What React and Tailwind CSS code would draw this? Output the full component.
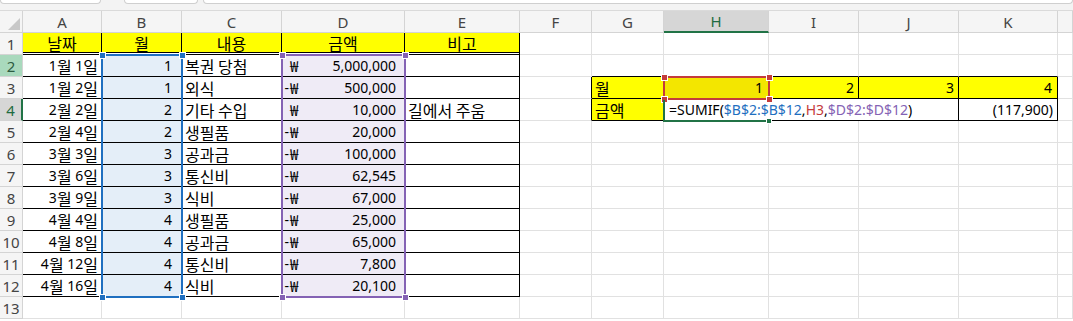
import React from 'react';

const COLS = ['A', 'B', 'C', 'D', 'E', 'F', 'G', 'H', 'I', 'J', 'K', ''];

const DATA = [
  ['1월 1일', 1, '복권 당첨', '', '5,000,000', ''],
  ['1월 2일', 1, '외식', '-', '500,000', ''],
  ['2월 2일', 2, '기타 수입', '', '10,000', '길에서 주움'],
  ['2월 4일', 2, '생필품', '-', '20,000', ''],
  ['3월 3일', 3, '공과금', '-', '100,000', ''],
  ['3월 6일', 3, '통신비', '-', '62,545', ''],
  ['3월 9일', 3, '식비', '-', '67,000', ''],
  ['4월 4일', 4, '생필품', '-', '25,000', ''],
  ['4월 8일', 4, '공과금', '-', '65,000', ''],
  ['4월 12일', 4, '통신비', '-', '7,800', ''],
  ['4월 16일', 4, '식비', '-', '20,100', ''],
];

const grid = 'border-r border-b border-[#e1e1e1]';
const boxed = 'border-r border-b border-black';

// Hangul runs get the CJK face a size up, like Malgun Gothic next to its latin digits
function Ko({ children }) {
  const parts = String(children).split(/([\uAC00-\uD7A3]+)/);
  return parts.map((p, i) =>
    /[\uAC00-\uD7A3]/.test(p) ? (
      <span key={i} className="text-[16px] font-['Noto_Sans_CJK_KR',sans-serif]">
        {p}
      </span>
    ) : (
      <span key={i}>{p}</span>
    )
  );
}

function Cell({ className = '', children }) {
  return <div className={`flex items-center overflow-visible whitespace-pre ${className}`}>{children}</div>;
}

function Handle({ x, y, color }) {
  return (
    <div
      className={`absolute w-[7px] h-[7px] border border-white ${color}`}
      style={{ left: x - 3, top: y - 3 }}
    />
  );
}

function RowHeader({ n }) {
  let cls = 'bg-[#f5f5f5] text-[#444] border-r border-b border-[#d4d4d4]';
  if (n === 2) cls = 'bg-[#a9d9bd] text-[#2d5c42] border-r border-b border-[#d4d4d4]';
  if (n === 4) cls = 'bg-[#d6d6d6] text-[#1e6b41] border-r-2 border-r-[#217346] border-b border-b-[#d4d4d4]';
  return <div className={`flex items-center justify-center text-[15px] ${cls}`}>{n}</div>;
}

export default function App() {
  return (
    <div className="w-[1073px] h-[321px] overflow-hidden bg-white text-[14px] text-black font-['Noto_Sans','Noto_Sans_CJK_KR',sans-serif]">
      {/* formula bar edge */}
      <div className="h-[11px] bg-[#f3f3f3] border-b border-[#dadada] flex gap-[24px]">
        <div className="w-[101px] h-[4px] bg-white border border-t-0 border-[#cfcfcf] rounded-b-[4px]" />
        <div className="w-[74px] h-[4px] bg-white border border-t-0 border-[#cfcfcf] rounded-b-[4px] -ml-[1px]" />
        <div className="flex-1 h-[4px] bg-white border border-t-0 border-[#cfcfcf] rounded-b-[4px] -ml-[19px]" />
      </div>

      <div className="relative grid grid-cols-[23px_79px_80px_100px_123px_115px_72px_72px_105px_90px_100px_99px_15px] auto-rows-[22px] leading-[22px]">
        {/* column headers */}
        <div className="relative bg-[#f5f5f5] border-r border-b border-[#d4d4d4]">
          <svg className="absolute inset-0" width="23" height="22">
            <polygon points="20,7 20,19 8,19" fill="#c8c8c8" />
          </svg>
        </div>
        {COLS.map((c, i) =>
          c === 'H' ? (
            <div key={i} className="flex items-center justify-center text-[15px] bg-[#d6d6d6] text-[#1e6b41] border-r border-[#d4d4d4] border-b-2 border-b-[#217346]">
              {c}
            </div>
          ) : (
            <div key={i} className="flex items-center justify-center text-[15px] bg-[#f5f5f5] text-[#444] border-r border-b border-[#d4d4d4]">
              {c}
            </div>
          )
        )}

        {/* row 1 */}
        <RowHeader n={1} />
        {['날짜', '월', '내용', '금액', '비고'].map((t) => (
          <Cell key={t} className="justify-center bg-[#ffff00] bg-clip-padding border-r border-r-black border-b-[3px] border-double border-b-black">
            <Ko>{t}</Ko>
          </Cell>
        ))}
        {Array.from({ length: 7 }).map((_, i) => (
          <div key={i} className={grid} />
        ))}

        {/* rows 2-12 */}
        {DATA.map((r, i) => {
          const n = i + 2;
          return (
            <React.Fragment key={n}>
              <RowHeader n={n} />
              <Cell className={`${boxed} justify-end pr-[3px]`}><Ko>{r[0]}</Ko></Cell>
              <Cell className={`${boxed} justify-end pr-[9px] bg-[#e4eef8]`}>{r[1]}</Cell>
              <Cell className={`${boxed} pl-[3px]`}><Ko>{r[2]}</Ko></Cell>
              <Cell className={`${boxed} justify-between pr-[8px] bg-[#efebf6]`}>
                <span className="flex">
                  <span className="w-[8px] text-right pr-[1px]">{r[3]}</span>
                  <span className="text-[15px] font-['Noto_Sans_CJK_KR',sans-serif]">₩</span>
                </span>
                <span>{r[4]}</span>
              </Cell>
              <Cell className={`${boxed} pl-[3px]`}><Ko>{r[5]}</Ko></Cell>
              {n === 3 || n === 4 ? (
                <div className="border-r border-r-black border-b border-b-[#e1e1e1]" />
              ) : (
                <div className={grid} />
              )}
              {n === 2 &&
                [0, 1, 2, 3, 4].map((k) => (
                  <div key={k} className="border-r border-r-[#e1e1e1] border-b border-b-black" />
                ))}
              {n === 3 && (
                <>
                  <Cell className={`${boxed} pl-[3px] bg-[#ffff00]`}><Ko>월</Ko></Cell>
                  <Cell className={`${boxed} justify-end pr-[5px] bg-[#f3e600]`}>1</Cell>
                  <Cell className={`${boxed} justify-end pr-[4px] bg-[#ffff00]`}>2</Cell>
                  <Cell className={`${boxed} justify-end pr-[4px] bg-[#ffff00]`}>3</Cell>
                  <Cell className={`${boxed} justify-end pr-[5px] bg-[#ffff00]`}>4</Cell>
                </>
              )}
              {n === 4 && (
                <>
                  <Cell className={`${boxed} pl-[3px] bg-[#ffff00]`}><Ko>금액</Ko></Cell>
                  <Cell className={`${boxed} col-span-3 pl-[5px]`}>
                    <span>=SUMIF(</span>
                    <span className="text-[#1f6fc0]">$B$2:$B$12</span>
                    <span>,</span>
                    <span className="text-[#c43b3b]">H3</span>
                    <span>,</span>
                    <span className="text-[#8462b4]">$D$2:$D$12</span>
                    <span>)</span>
                  </Cell>
                  <Cell className={`${boxed} justify-end pr-[4px]`}>(117,900)</Cell>
                </>
              )}
              {n > 4 && [0, 1, 2, 3, 4].map((k) => <div key={k} className={grid} />)}
              <div className={grid} />
            </React.Fragment>
          );
        })}

        {/* row 13 */}
        <RowHeader n={13} />
        {Array.from({ length: 12 }).map((_, i) => (
          <div key={i} className={grid} />
        ))}

        {/* range reference highlights */}
        <div className="absolute left-[101px] top-[43px] w-[82px] h-[244px] border-2 border-[#1f6fc0] pointer-events-none" />
        <Handle x={102} y={44} color="bg-[#1f6fc0]" />
        <Handle x={182} y={44} color="bg-[#1f6fc0]" />
        <Handle x={102} y={286} color="bg-[#1f6fc0]" />
        <Handle x={182} y={286} color="bg-[#1f6fc0]" />

        <div className="absolute left-[281px] top-[43px] w-[125px] h-[244px] border-2 border-[#8462b4] pointer-events-none" />
        <Handle x={282} y={44} color="bg-[#8462b4]" />
        <Handle x={405} y={44} color="bg-[#8462b4]" />
        <Handle x={282} y={286} color="bg-[#8462b4]" />
        <Handle x={405} y={286} color="bg-[#8462b4]" />

        <div className="absolute left-[663px] top-[65px] w-[107px] h-[24px] border-2 border-[#c43b3b] pointer-events-none" />
        <Handle x={664} y={66} color="bg-[#c43b3b]" />
        <Handle x={769} y={66} color="bg-[#c43b3b]" />
        <Handle x={664} y={88} color="bg-[#c43b3b]" />
        <Handle x={769} y={88} color="bg-[#c43b3b]" />

        {/* active cell */}
        <div className="absolute left-[663px] top-[89px] w-[106px] h-[22px] border-l-2 border-b-2 border-[#217346] pointer-events-none" />
        <div className="absolute left-[766px] top-[107px] w-[6px] h-[6px] bg-[#217346] border border-white" />
      </div>
    </div>
  );
}
